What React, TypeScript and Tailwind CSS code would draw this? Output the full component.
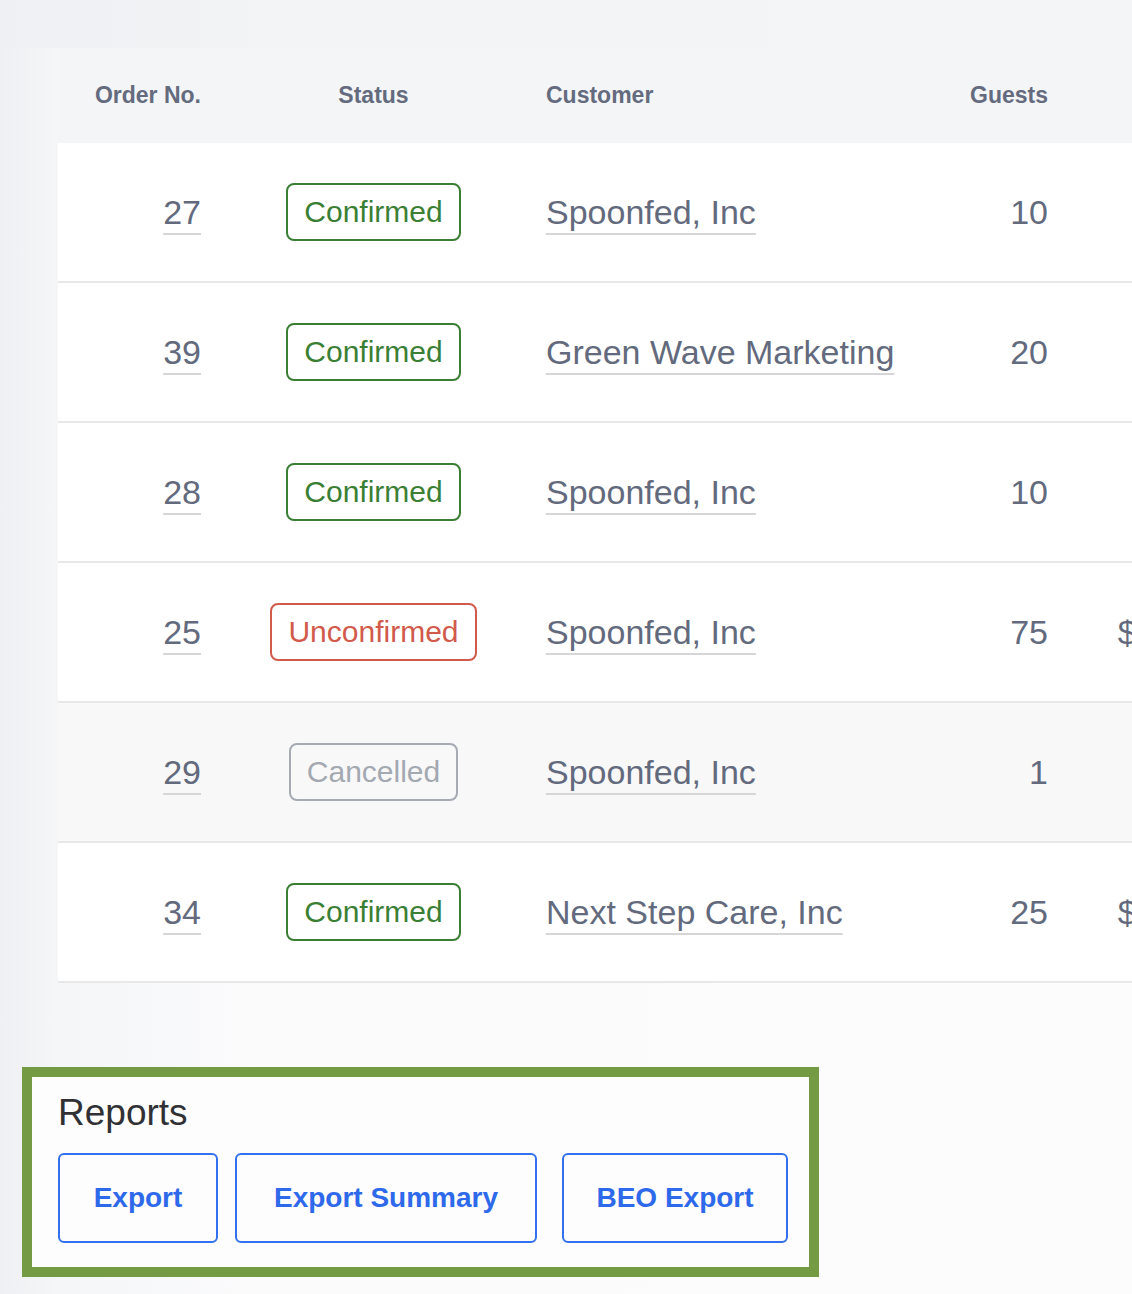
import React from "react";

type Status = "Confirmed" | "Unconfirmed" | "Cancelled";

const rows: { no: string; status: Status; customer: string; guests: string; total: string; alt?: boolean }[] = [
  { no: "27", status: "Confirmed", customer: "Spoonfed, Inc", guests: "10", total: "$225.00" },
  { no: "39", status: "Confirmed", customer: "Green Wave Marketing", guests: "20", total: "$450.00" },
  { no: "28", status: "Confirmed", customer: "Spoonfed, Inc", guests: "10", total: "$225.00" },
  { no: "25", status: "Unconfirmed", customer: "Spoonfed, Inc", guests: "75", total: "$1,687.50" },
  { no: "29", status: "Cancelled", customer: "Spoonfed, Inc", guests: "1", total: "$22.50", alt: true },
  { no: "34", status: "Confirmed", customer: "Next Step Care, Inc", guests: "25", total: "$1,562.50" },
];

function Badge({ status }: { status: Status }) {
  if (status === "Confirmed")
    return (
      <span className="inline-flex h-[58px] items-center rounded-[8px] border-2 border-[#3b7f35] px-[16px] text-[30px] leading-none text-[#3b7f35]">
        Confirmed
      </span>
    );
  if (status === "Unconfirmed")
    return (
      <span className="inline-flex h-[58px] items-center rounded-[8px] border-2 border-[#d25a4b] px-[16px] text-[30px] leading-none text-[#d25a4b]">
        Unconfirmed
      </span>
    );
  return (
    <span className="inline-flex h-[58px] items-center rounded-[8px] border-2 border-[#a6aab3] px-[16px] text-[30px] leading-none text-[#a3a8b1]">
      Cancelled
    </span>
  );
}

const linkCls =
  "underline decoration-2 decoration-[#d6d6d8] underline-offset-[9px] text-[#636a7d]";

export default function App() {
  return (
    <div
      className="min-h-[1294px] w-full overflow-hidden bg-[linear-gradient(to_right,#eef0f3_0px,#f5f6f8_58px,#fbfbfc_260px,#fcfcfd_100%)] pb-[18px]"
      style={{ fontFamily: '"Liberation Sans", Arial, sans-serif' }}
    >
      <div className="h-[48px] bg-[linear-gradient(to_right,#eef0f3,#f3f4f6_300px,#f4f5f7)]" />
      <div className="ml-[58px] w-[1226px]">
        <div className="grid h-[95px] grid-cols-[179px_273px_430px_144px_200px] items-center bg-[#f4f5f7] text-[23px] font-bold text-[#646b7e]">
          <div className="pr-[36px] text-right">Order No.</div>
          <div className="text-center">Status</div>
          <div className="pl-[36px]">Customer</div>
          <div className="pr-[36px] text-right">Guests</div>
          <div className="pr-[15px] text-right">Total</div>
        </div>
        {rows.map((r) => (
          <div
            key={r.no}
            className={`grid h-[140px] grid-cols-[179px_273px_430px_144px_200px] items-center border-b-2 border-[#e8e8e9] text-[34px] text-[#636a7d] ${
              r.alt ? "bg-[#f8f8f9]" : "bg-white"
            }`}
          >
            <div className="pr-[36px] text-right">
              <span className={linkCls}>{r.no}</span>
            </div>
            <div className="flex justify-center">
              <Badge status={r.status} />
            </div>
            <div className="whitespace-nowrap pl-[36px]">
              <span className={linkCls}>{r.customer}</span>
            </div>
            <div className="pr-[36px] text-right">{r.guests}</div>
            <div className="whitespace-nowrap pr-[15px] text-right">{r.total}</div>
          </div>
        ))}
      </div>

      <div className="ml-[22px] mt-[84px] w-[797px] border-[10px] border-[#749b44] bg-[#fdfdfd] pb-[24px] pl-[26px] pt-[17px]">
        <div className="text-[37px] leading-[37px] text-[#313135]">Reports</div>
        <div className="mt-[22px] flex">
          <button className="flex h-[90px] w-[160px] items-center justify-center rounded-[6px] border-2 border-[#3270ef] text-[28px] font-bold text-[#2d69ea]">
            Export
          </button>
          <button className="ml-[17px] flex h-[90px] w-[302px] items-center justify-center rounded-[6px] border-2 border-[#3270ef] text-[28px] font-bold text-[#2d69ea]">
            Export Summary
          </button>
          <button className="ml-[25px] flex h-[90px] w-[226px] items-center justify-center rounded-[6px] border-2 border-[#3270ef] text-[28px] font-bold text-[#2d69ea]">
            BEO Export
          </button>
        </div>
      </div>
    </div>
  );
}
